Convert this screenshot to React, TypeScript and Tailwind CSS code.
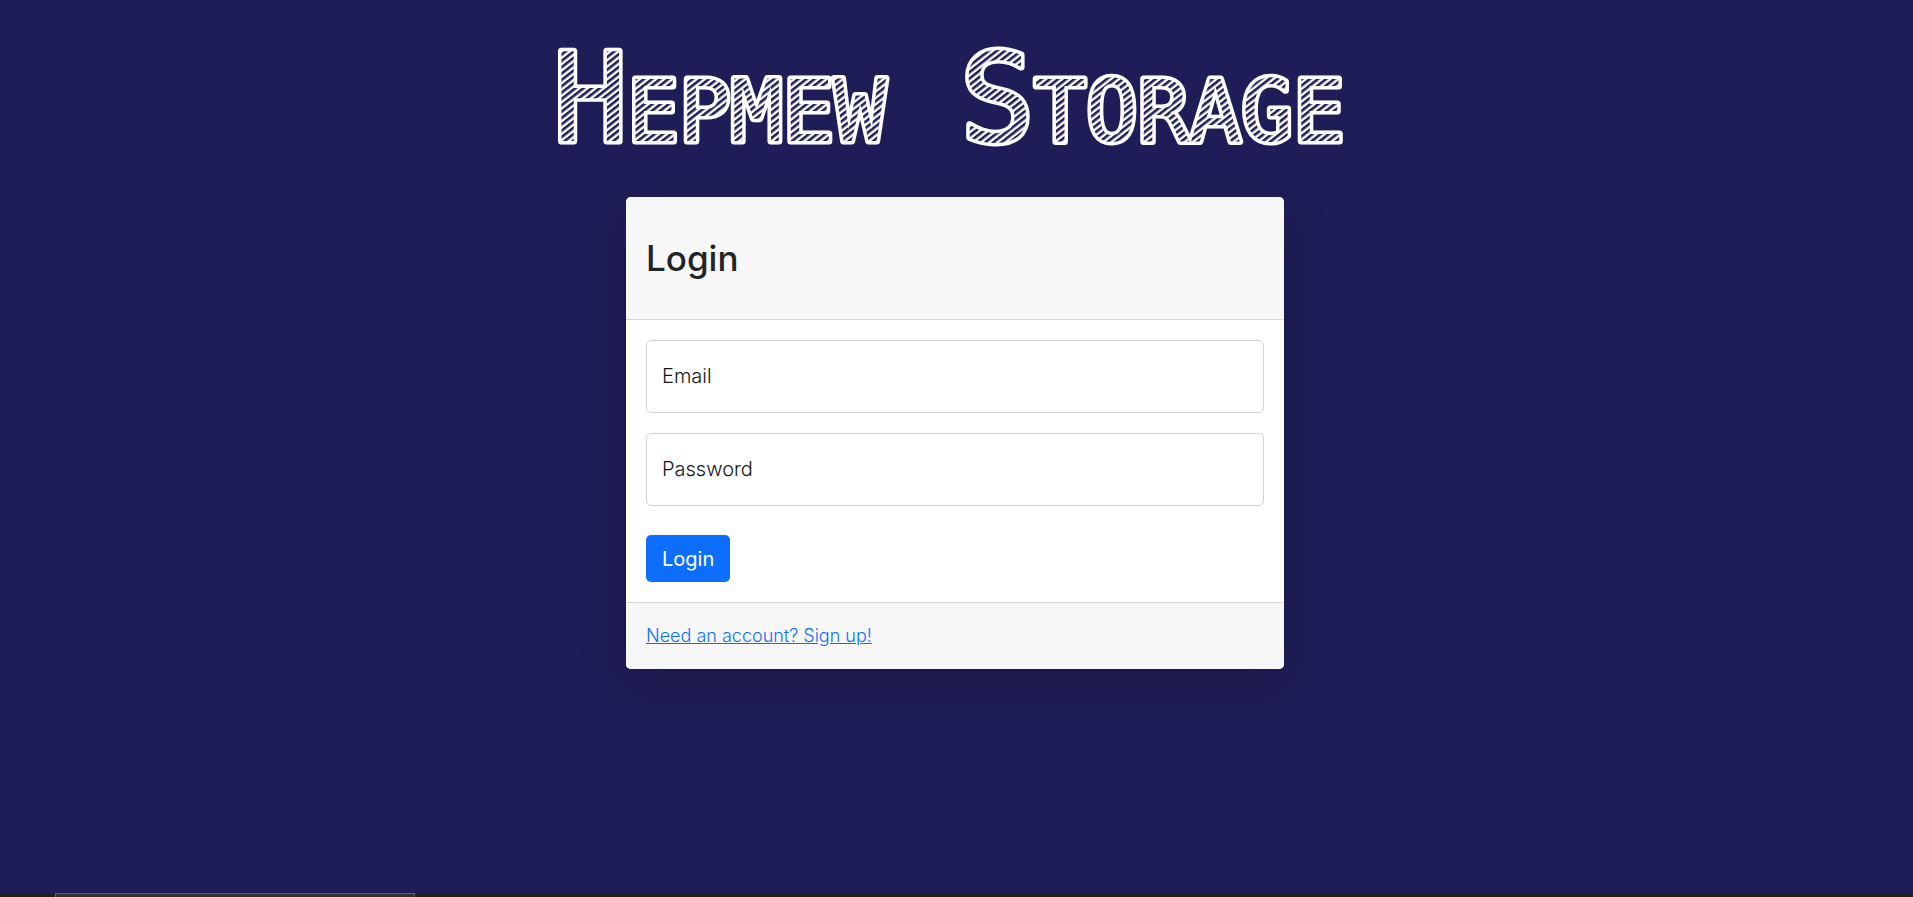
function Field({ id, label, type }: { id: string; label: string; type: string }) {
  return (
    <div className="relative">
      <input
        id={id}
        type={type}
        className="peer block h-[73px] w-full rounded-[5px] border border-[#ced4da] bg-white px-4 pt-6 text-xl text-[#212529] outline-none focus:border-[#86b7fe]"
      />
      <label
        htmlFor={id}
        className="pointer-events-none absolute inset-0 flex items-center px-4 pb-[2px] text-xl font-light text-[#15181b] peer-focus:items-start"
      >
        {label}
      </label>
    </div>
  );
}

function Wordmark() {
  return (
    <svg viewBox="0 0 800 144" className="block h-[144px] max-w-full overflow-visible">
      <defs>
        <pattern id="hatch" width="5" height="5" patternUnits="userSpaceOnUse" patternTransform="rotate(-38)">
          <rect width="5" height="5" fill="#ffffff" />
          <rect width="5" height="2.6" fill="#1f1d57" />
        </pattern>
      </defs>
      <text
        x="394"
        y="121"
        textAnchor="middle"
        fill="url(#hatch)"
        stroke="#ffffff"
        strokeWidth="7"
        strokeLinejoin="round"
        className="font-['DejaVu_Sans_Mono',monospace] text-[123px] [font-variant-caps:small-caps] [paint-order:stroke]"
      >
        Hepmew Storage
      </text>
    </svg>
  );
}

export default function App() {
  return (
    <div className="flex min-h-screen flex-col bg-[#1f1d57] font-['Inter',sans-serif] text-[#212529]">
      <main className="flex grow flex-col items-center pr-[3px]">
        <h1 className="pt-5">
          <Wordmark />
        </h1>
        <section className="mt-[33px] w-full max-w-[658px] overflow-hidden rounded-[5px] bg-white shadow-[0_16px_48px_rgba(0,0,0,0.15)]">
          <header className="border-b border-[#d7d7d7] bg-[#f7f7f7] px-5 py-10">
            <h2 className="text-[35px] leading-[42px] font-medium">Login</h2>
          </header>
          <form className="flex flex-col items-start p-5" onSubmit={(e) => e.preventDefault()}>
            <div className="flex w-full flex-col gap-5">
              <Field id="email" label="Email" type="email" />
              <Field id="password" label="Password" type="password" />
            </div>
            <button type="submit" className="mt-[29px] h-[47px] rounded-[5px] bg-[#0d6efd] px-4 text-xl text-white">
              Login
            </button>
          </form>
          <footer className="border-t border-[#d7d7d7] bg-[#f7f7f7] px-5 py-5 text-lg leading-[26px] font-light">
            <a href="#signup" className="text-[#0d6efd] underline">
              Need an account? Sign up!
            </a>
          </footer>
        </section>
      </main>
      <div className="flex h-1 bg-[#211f20] pl-[55px]">
        <div className="w-[360px] border-x border-t border-[#606060] bg-[#333333]" />
      </div>
    </div>
  );
}
